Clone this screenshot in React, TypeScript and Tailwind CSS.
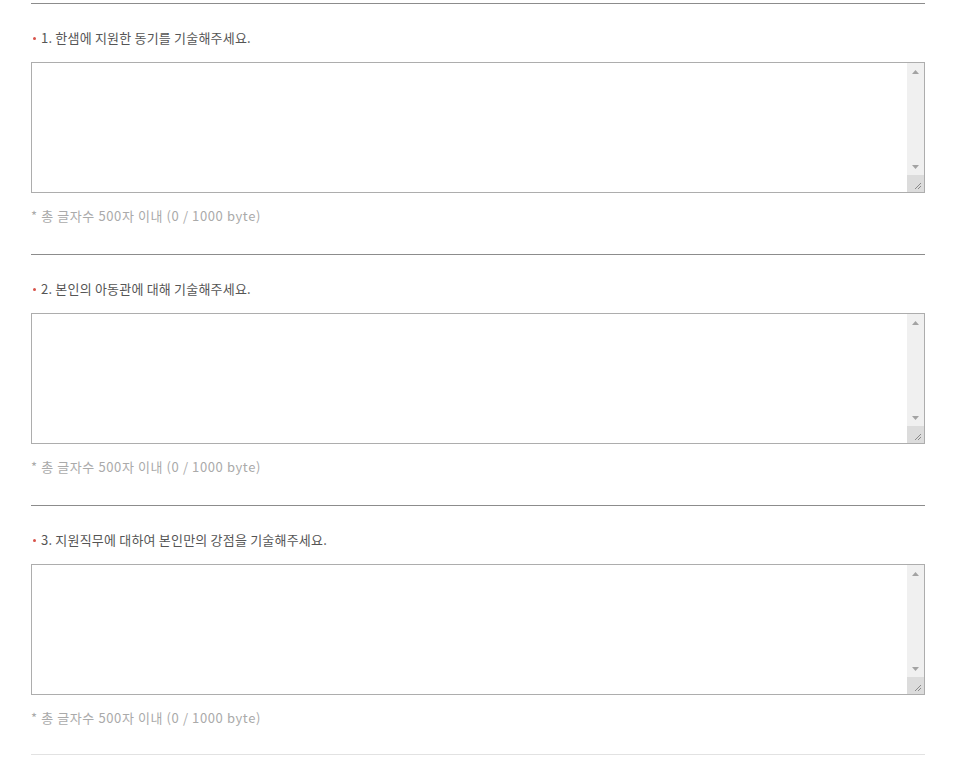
const questions = [
  "1. 한샘에 지원한 동기를 기술해주세요.",
  "2. 본인의 아동관에 대해 기술해주세요.",
  "3. 지원직무에 대하여 본인만의 강점을 기술해주세요.",
];

const font = {
  fontFamily: '"Noto Sans CJK KR", "Noto Sans", sans-serif',
};

function FakeScrollbar() {
  return (
    <div className="flex w-[17px] flex-col bg-[#f0f0f0]">
      <div className="flex h-[17px] items-center justify-center">
        <svg width="7" height="4" viewBox="0 0 7 4">
          <path d="M3.5 0 L7 4 L0 4 Z" fill="#a3a3a3" />
        </svg>
      </div>
      <div className="flex-1" />
      <div className="flex h-[17px] items-center justify-center">
        <svg width="7" height="4" viewBox="0 0 7 4">
          <path d="M0 0 L7 0 L3.5 4 Z" fill="#a3a3a3" />
        </svg>
      </div>
      <div className="flex h-[17px] items-end justify-end bg-[#dcdcdc] pb-[2px] pr-[2px]">
        <svg width="9" height="9" viewBox="0 0 9 9">
          <path d="M8 2 L2 8 M8 5 L5 8" stroke="#8a8a8a" strokeWidth="1" />
        </svg>
      </div>
    </div>
  );
}

function Question({ label, last }: { label: string; last: boolean }) {
  return (
    <section
      className={
        last
          ? "border-t border-[#8c8c8c] pt-[24px] pb-[26px]"
          : "border-t border-[#8c8c8c] pt-[24px] pb-[28px]"
      }
    >
      <p className="flex h-5 items-center text-[13px] tracking-[0.2px] text-[#555]">
        <span className="mr-[5px] ml-[2px] inline-block h-[3px] w-[3px] rounded-full bg-[#d8534a]" />
        {label}
      </p>
      <div className="mt-[14px] flex h-[131px] border border-[#adadad] bg-white">
        <textarea className="flex-1 resize-none outline-none" />
        <FakeScrollbar />
      </div>
      <p className="mt-[13px] h-5 text-[13px] leading-5 tracking-[0.6px] text-[#aaa]">
        * 총 글자수 500자 이내 (0 / 1000 byte)
      </p>
    </section>
  );
}

export default function App() {
  return (
    <div className="min-h-screen bg-white pt-[3px]" style={font}>
      <div className="ml-[31px] w-[894px]">
        {questions.map((q, i) => (
          <Question key={q} label={q} last={i === questions.length - 1} />
        ))}
        <div className="border-t border-[#e2e2e2]" />
      </div>
    </div>
  );
}
